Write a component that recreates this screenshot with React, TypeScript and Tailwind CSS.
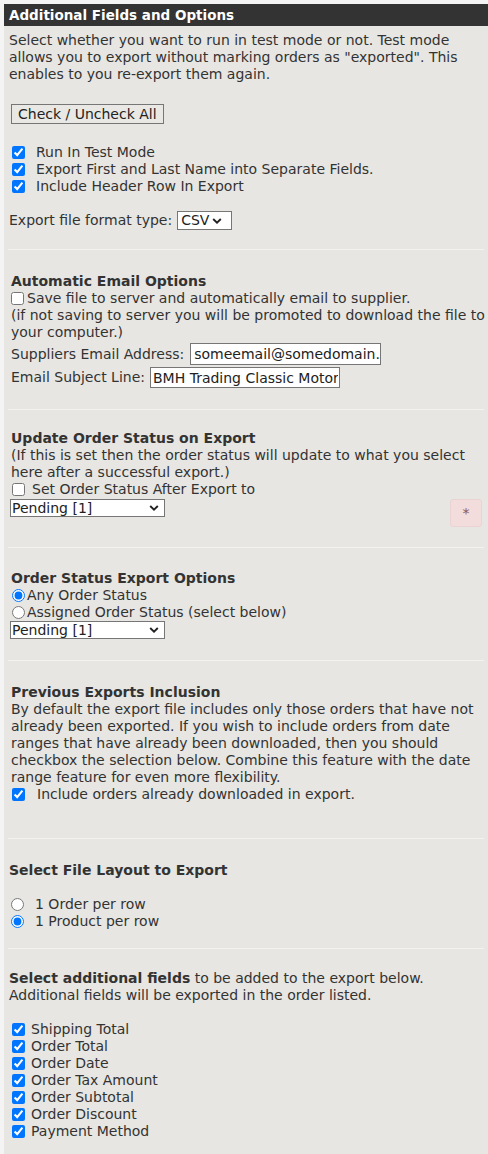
import React from 'react';

const font = { fontFamily: '"DejaVu Sans", Verdana, sans-serif' };

function Sep() {
  return <div className="h-px bg-[#f3f2ef] ml-[4px] mr-[4px]" />;
}

function Chevron({ className }: { className: string }) {
  return (
    <svg width="10" height="6" viewBox="0 0 10 6" className={`absolute pointer-events-none ${className}`}>
      <path d="M1.2 1 L5 4.6 L8.8 1" fill="none" stroke="#222" strokeWidth="1.9" />
    </svg>
  );
}

function Check({ label, gap = 'mr-[11px]', checked = true }: { label: string; gap?: string; checked?: boolean }) {
  return (
    <label className="flex items-center h-[17px]">
      <input type="checkbox" defaultChecked={checked} className={`m-0 ml-[2px] w-[13px] h-[13px] ${gap}`} />
      <span>{label}</span>
    </label>
  );
}

function StatusSelect() {
  return (
    <div className="relative w-[155px]">
      <select
        defaultValue="1"
        className="appearance-none block w-[155px] h-[18px] border border-[#767676] bg-white text-[14px] leading-[16px] pl-[1px] text-[#222]"
      >
        <option value="1">Pending [1]</option>
        <option value="2">Processing [2]</option>
        <option value="3">Delivered [3]</option>
      </select>
      <Chevron className="right-[6px] top-[6px]" />
    </div>
  );
}

const extraFields = [
  'Shipping Total',
  'Order Total',
  'Order Date',
  'Order Tax Amount',
  'Order Subtotal',
  'Order Discount',
  'Payment Method',
];

export default function App() {
  return (
    <div className="bg-[#f4f4f4] pl-[4px] pt-[4px]" style={font}>
      <div className="bg-[#e7e6e2] min-h-[1150px] text-[14px] leading-[17px] text-[#333]">
        <div className="h-[22px] leading-[22px] bg-[#333333] text-white font-bold text-[13.5px] pl-[5px]">
          Additional Fields and Options
        </div>

        <p className="pt-[6px] pl-[5px] whitespace-nowrap">
          Select whether you want to run in test mode or not. Test mode
          <br />
          allows you to export without marking orders as "exported". This
          <br />
          enables to you re-export them again.
        </p>

        <button className="block mt-[21px] ml-[7px] h-[20px] px-[6px] border border-[#767676] bg-[#e9e8e4] text-[14px] leading-[18px] text-[#222]">
          Check / Uncheck All
        </button>

        <div className="mt-[20px] pl-[6px]">
          <Check label="Run In Test Mode" />
          <Check label="Export First and Last Name into Separate Fields." />
          <Check label="Include Header Row In Export" />
        </div>

        <div className="mt-[16px] pl-[5px] flex items-center h-[19px]">
          <span>Export file format type:</span>
          <div className="relative ml-[5px]">
            <select
              defaultValue="csv"
              className="appearance-none block w-[55px] h-[19px] border border-[#767676] bg-white text-[14px] leading-[17px] pl-[3px] text-[#222]"
            >
              <option value="csv">CSV</option>
              <option value="txt">TXT</option>
            </select>
            <Chevron className="right-[10px] top-[7px]" />
          </div>
        </div>

        <div className="h-[19px]" />
        <Sep />

        <div className="pt-[23px] pl-[7px]">
          <div className="font-bold">Automatic Email Options</div>
          <label className="flex items-center h-[17px]">
            <input type="checkbox" className="m-0 w-[13px] h-[13px] mr-[3px]" />
            <span>Save file to server and automatically email to supplier.</span>
          </label>
          <div className="whitespace-nowrap">
            (if not saving to server you will be promoted to download the file to
            <br />
            your computer.)
          </div>
          <div className="flex items-center mt-[2px]">
            <span>Suppliers Email Address:</span>
            <input
              type="text"
              defaultValue="someemail@somedomain.com"
              className="ml-[6px] w-[191px] h-[22px] border border-[#767676] bg-white pl-[3px] pr-[1px] text-[14px] text-[#222]"
            />
          </div>
          <div className="flex items-center mt-[2px]">
            <span>Email Subject Line:</span>
            <input
              type="text"
              defaultValue="BMH Trading Classic Motors Export"
              className="ml-[5px] w-[190px] h-[21px] border border-[#767676] bg-white pl-[2px] pr-[1px] text-[14px] text-[#222]"
            />
          </div>
        </div>

        <div className="h-[21px]" />
        <Sep />

        <div className="pt-[20px] pl-[7px]">
          <div className="font-bold">Update Order Status on Export</div>
          <div className="whitespace-nowrap">
            (If this is set then the order status will update to what you select
            <br />
            here after a successful export.)
          </div>
          <label className="flex items-center h-[17px]">
            <input type="checkbox" className="m-0 ml-[1px] w-[13px] h-[13px] mr-[7px]" />
            <span>Set Order Status After Export to</span>
          </label>
          <div className="flex items-start justify-between pr-[6px] mt-[1px]">
            <div className="-ml-[1px]">
              <StatusSelect />
            </div>
            <div className="w-[32px] h-[28px] rounded-[3px] bg-[#f2dcdc] border border-[#ecd3d3] flex items-center justify-center text-[#8a5555] text-[14px]">
              *
            </div>
          </div>
        </div>

        <div className="h-[20px]" />
        <Sep />

        <div className="pt-[22px] pl-[7px]">
          <div className="font-bold">Order Status Export Options</div>
          <label className="flex items-center h-[17px]">
            <input type="radio" name="status" defaultChecked className="m-0 ml-[1px] w-[13px] h-[13px] mr-[2px]" />
            <span>Any Order Status</span>
          </label>
          <label className="flex items-center h-[17px]">
            <input type="radio" name="status" className="m-0 ml-[1px] w-[13px] h-[13px] mr-[2px]" />
            <span>Assigned Order Status (select below)</span>
          </label>
          <div className="-ml-[1px]">
            <StatusSelect />
          </div>
        </div>

        <div className="h-[21px]" />
        <Sep />

        <div className="pt-[23px] pl-[7px]">
          <div className="font-bold">Previous Exports Inclusion</div>
          <div className="whitespace-nowrap">
            By default the export file includes only those orders that have not
            <br />
            already been exported. If you wish to include orders from date
            <br />
            ranges that have already been downloaded, then you should
            <br />
            checkbox the selection below. Combine this feature with the date
            <br />
            range feature for even more flexibility.
          </div>
          <label className="flex items-center h-[17px]">
            <input type="checkbox" defaultChecked className="m-0 ml-[1px] w-[13px] h-[13px] mr-[12px]" />
            <span>Include orders already downloaded in export.</span>
          </label>
        </div>

        <div className="h-[35px]" />
        <Sep />

        <div className="pt-[23px] pl-[5px]">
          <div className="font-bold">Select File Layout to Export</div>
          <div className="h-[17px]" />
          <label className="flex items-center h-[17px]">
            <input type="radio" name="layout" className="m-0 ml-[2px] w-[13px] h-[13px] mr-[11px]" />
            <span>1 Order per row</span>
          </label>
          <label className="flex items-center h-[17px]">
            <input type="radio" name="layout" defaultChecked className="m-0 ml-[2px] w-[13px] h-[13px] mr-[11px]" />
            <span>1 Product per row</span>
          </label>
        </div>

        <div className="h-[18px]" />
        <Sep />

        <div className="pt-[21px] pl-[5px] pb-[16px]">
          <div className="whitespace-nowrap">
            <b>Select additional fields</b> to be added to the export below.
            <br />
            Additional fields will be exported in the order listed.
          </div>
          <div className="h-[17px]" />
          {extraFields.map((f) => (
            <label key={f} className="flex items-center h-[17px]">
              <input type="checkbox" defaultChecked className="m-0 ml-[3px] w-[13px] h-[13px] mr-[6px]" />
              <span>{f}</span>
            </label>
          ))}
        </div>
      </div>
    </div>
  );
}
